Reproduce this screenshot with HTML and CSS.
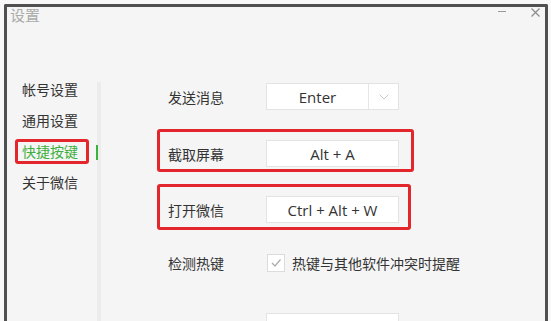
FILE: index.html
```html
<!DOCTYPE html>
<html lang="zh-CN">
<head>
<meta charset="utf-8">
<title>设置</title>
<link rel="stylesheet" href="styles.css">
</head>
<body>
<div class="window">
  <div class="titlebar">
    <span class="title">设置</span>
    <div class="controls">
      <span class="min"></span>
      <svg class="close" width="9" height="9" viewBox="0 0 9 9"><path d="M0.5 0.5 L8.5 8.5 M8.5 0.5 L0.5 8.5" stroke="#8c8c8c" stroke-width="1.2" fill="none"/></svg>
    </div>
  </div>
  <div class="main-area">
    <nav class="sidebar">
      <div class="nav-item">帐号设置</div>
      <div class="nav-item">通用设置</div>
      <div class="nav-item active"><span class="mark">快捷按键</span></div>
      <div class="nav-item">关于微信</div>
    </nav>
    <div class="divider"><span class="indicator"></span></div>
    <main class="content">
      <div class="row row-send">
        <span class="label">发送消息</span>
        <div class="field select">
          <span class="value">Enter</span>
          <span class="arrow"><svg width="10" height="6" viewBox="0 0 10 6"><path d="M0.5 0.5 L5 5 L9.5 0.5" stroke="#c9c9c9" stroke-width="1" fill="none"/></svg></span>
        </div>
      </div>
      <div class="row row-shot flag flag-a">
        <span class="label">截取屏幕</span>
        <div class="field">Alt + A</div>
      </div>
      <div class="row row-open flag flag-b">
        <span class="label">打开微信</span>
        <div class="field">Ctrl + Alt + W</div>
      </div>
      <div class="row row-detect">
        <span class="label">检测热键</span>
        <span class="checkbox"><svg width="16" height="16" viewBox="0 0 16 16"><path d="M4 8 L7 11 L12.5 4.5" stroke="#a9b0a9" stroke-width="1.3" fill="none"/></svg></span>
        <span class="check-text">热键与其他软件冲突时提醒</span>
      </div>
      <div class="row row-reset">
        <span class="label"></span>
        <div class="field button">恢复默认设置</div>
      </div>
    </main>
  </div>
</div>
</body>
</html>
```
FILE: styles.css
```css
html, body {
  margin: 0;
  padding: 0;
}
body {
  background: #f8f8f8;
  overflow: hidden;
  font-family: "Noto Sans CJK SC", "Noto Sans", sans-serif;
  color: #333;
}
.window {
  margin: 4px 0 0 4px;
  width: 544px;
  height: 340px;
  box-sizing: border-box;
  border: 3px solid #505050;
  border-bottom: none;
  border-radius: 2px 2px 0 0;
  background: #f5f5f5;
  display: flex;
  flex-direction: column;
}
.titlebar {
  display: flex;
  align-items: flex-start;
  height: 30px;
  flex: none;
}
.title {
  font-size: 15px;
  line-height: 16px;
  color: #ababab;
  padding-left: 3px;
}
.controls {
  margin-left: auto;
  margin-top: 1px;
  display: flex;
  align-items: flex-start;
  gap: 25px;
  padding-right: 5px;
}
.min {
  display: block;
  width: 8px;
  height: 1px;
  margin-top: 3px;
  background: #9a9a9a;
}
.close {
  display: block;
}
.main-area {
  flex: 1;
  display: flex;
}
.sidebar {
  width: 90px;
  flex: none;
  box-sizing: border-box;
  padding-top: 37px;
  padding-left: 15px;
}
.nav-item {
  height: 31px;
  line-height: 31px;
  font-size: 14px;
  color: #333;
  white-space: nowrap;
}
.nav-item.active {
  color: #3fb03f;
}
.mark {
  display: inline-block;
  position: relative;
}
.mark::after {
  content: "";
  position: absolute;
  left: -7px;
  right: -11px;
  top: 3px;
  bottom: 3px;
  border: 3px solid #e3262b;
  border-radius: 3px;
}
.divider {
  width: 4px;
  flex: none;
  margin-top: 45px;
  background: #ececec;
  position: relative;
}
.indicator {
  position: absolute;
  left: -1px;
  top: 63px;
  width: 2px;
  height: 15px;
  background: #3bb23b;
}
.content {
  padding-left: 67px;
  padding-top: 46px;
}
.row {
  display: flex;
  align-items: center;
  height: 27px;
  width: 231px;
  position: relative;
}
.row-shot { margin-top: 30px; }
.row-open { margin-top: 29px; }
.row-detect { margin-top: 26px; width: auto; }
.row-reset { margin-top: 37px; }
.label {
  width: 98px;
  flex: none;
  font-size: 14px;
  color: #333;
}
.field {
  width: 133px;
  height: 27px;
  box-sizing: border-box;
  border: 1px solid #e3e3e3;
  background: #fff;
  font-family: "Open Sans", "Noto Sans", sans-serif;
  font-size: 15px;
  color: #333;
  display: flex;
  align-items: center;
  justify-content: center;
}
.select {
  justify-content: flex-start;
}
.select .value {
  width: 101px;
  text-align: center;
}
.select .arrow {
  width: 29px;
  height: 100%;
  border-left: 1px solid #e6e6e6;
  display: flex;
  align-items: center;
  justify-content: center;
}
.select .arrow svg {
  display: block;
}
.button {
  font-family: "Noto Sans CJK SC", sans-serif;
  font-size: 14px;
}
.checkbox {
  width: 18px;
  height: 18px;
  box-sizing: border-box;
  margin-left: 1px;
  border: 1px solid #dcdcdc;
  background: #fff;
  display: flex;
  align-items: center;
  justify-content: center;
}
.checkbox svg {
  display: block;
}
.check-text {
  margin-left: 7px;
  font-size: 14px;
  color: #333;
  white-space: nowrap;
}
.flag::before {
  content: "";
  position: absolute;
  border: 3px solid #e3262b;
  border-radius: 3px;
}
.flag-a::before {
  left: -11px;
  right: -15px;
  top: -11px;
  bottom: -5px;
}
.flag-b::before {
  left: -11px;
  right: -12px;
  top: -12px;
  bottom: -7px;
}
```
